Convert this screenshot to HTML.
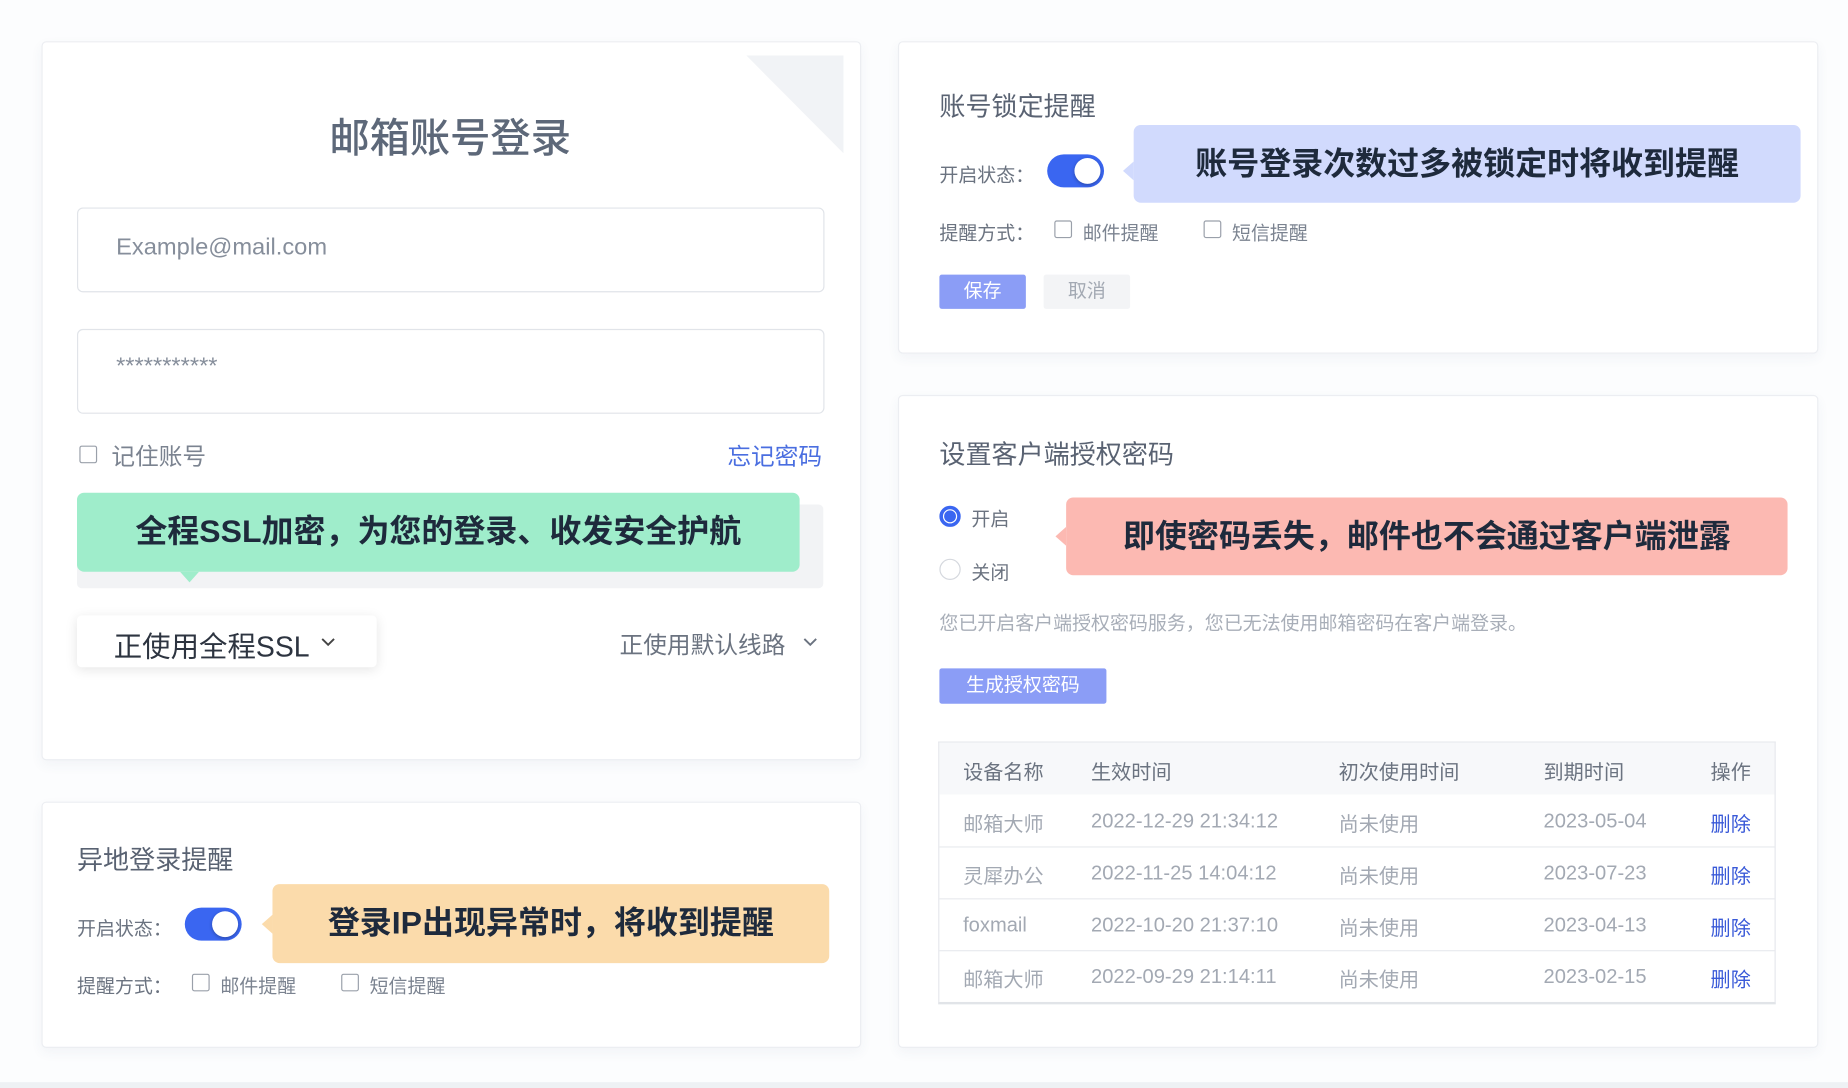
<!DOCTYPE html>
<html><head><meta charset="utf-8">
<style>
html,body{margin:0;padding:0;width:1848px;height:1088px;overflow:hidden;background:#fcfdfe;}
#w{position:absolute;left:0;top:0;width:1560px;height:923px;transform:scale(1.1846,1.1788);transform-origin:0 0;font-family:"Liberation Sans","Noto Sans CJK SC",sans-serif;}
.a{position:absolute;white-space:nowrap;}
.card{position:absolute;background:#fff;border:1px solid #eceef2;border-radius:4px;box-shadow:0 4px 10px rgba(60,80,120,0.05);}
.inp{position:absolute;left:65px;width:629px;height:70px;border:1px solid #e1e4e9;border-radius:5px;background:#fff;}
.cb{position:absolute;width:13px;height:13px;border:1.5px solid #9aa0aa;border-radius:2px;background:#fff;}
.tog{position:absolute;width:48px;height:28px;border-radius:14px;background:#3a66f1;}
.tog::after{content:"";position:absolute;right:3px;top:3px;width:22px;height:22px;border-radius:50%;background:#fff;box-shadow:0 1px 3px rgba(0,0,0,.3);}
.tip{position:absolute;border-radius:6px;color:#1e2a3c;font-size:27px;font-weight:bold;text-align:center;}
.lbl{font-size:16px;color:#6b7380;}
.t{font-size:17px;color:#a3a9b3;}
.del{font-size:17px;color:#3a5ad8;}
.h{font-size:17px;color:#6b7380;}
.row{position:absolute;left:793px;width:705px;height:1px;background:#e8eaee;}
</style></head><body><div id="w">
<div class="a" style="left:0;top:918px;width:1560px;height:5px;background:#eef1f4"></div>

<div class="card" style="left:35px;top:35px;width:690px;height:608px"></div>
<svg class="a" style="left:630px;top:47px" width="83" height="84"><polygon points="0,0 82,0 82,83" fill="#f1f3f6"/></svg>
<div class="a" style="left:0;width:760px;top:90px;text-align:center;font-size:34px;color:#5d6879;font-weight:500">邮箱账号登录</div>
<div class="inp" style="top:176px"></div>
<div class="a" style="left:98px;top:199px;font-size:20px;color:#868e9b">Example@mail.com</div>
<div class="inp" style="top:279px"></div>
<div class="a" style="left:98px;top:300px;font-size:20px;color:#868e9b">***********</div>
<div class="cb" style="left:67px;top:378px"></div>
<div class="a" style="left:94px;top:371px;font-size:20px;color:#7b8390">记住账号</div>
<div class="a" style="left:614px;top:371px;font-size:20px;color:#4a6ee0">忘记密码</div>
<div class="a" style="left:65px;top:428px;width:630px;height:71px;background:#f2f3f5;border-radius:4px"></div>
<div class="tip" style="left:65px;top:418px;width:610px;height:67px;line-height:66px;background:#9fedcb">全程SSL加密，为您的登录、收发安全护航</div>
<div class="a" style="left:152px;top:485px;width:0;height:0;border-left:8px solid transparent;border-right:8px solid transparent;border-top:9px solid #9fedcb"></div>
<div class="a" style="left:65px;top:522px;width:253px;height:44px;background:#fff;border-radius:4px;box-shadow:0 2px 10px rgba(0,0,0,.10)"></div>
<div class="a" style="left:96px;top:529px;font-size:24px;color:#2d3440">正使用全程SSL</div>
<svg class="a" style="left:270px;top:540px" width="14" height="10"><path d="M2 2l5 5 5-5" fill="none" stroke="#444" stroke-width="1.6"/></svg>
<div class="a" style="left:523px;top:531px;font-size:20px;color:#6b7380">正使用默认线路</div>
<svg class="a" style="left:677px;top:540px" width="14" height="10"><path d="M2 2l5 5 5-5" fill="none" stroke="#6b7380" stroke-width="1.6"/></svg>

<div class="card" style="left:35px;top:680px;width:690px;height:207px"></div>
<div class="a" style="left:65px;top:712px;font-size:22px;color:#596272">异地登录提醒</div>
<div class="a lbl" style="left:65px;top:774px">开启状态：</div>
<div class="tog" style="left:156px;top:770px"></div>
<div class="tip" style="left:230px;top:750px;width:470px;height:67px;line-height:67px;background:#fbdbab">登录IP出现异常时，将收到提醒</div>
<div class="a" style="left:221px;top:776px;border-top:8px solid transparent;border-bottom:8px solid transparent;border-right:9px solid #fbdbab"></div>
<div class="a lbl" style="left:65px;top:823px">提醒方式：</div>
<div class="cb" style="left:162px;top:826px"></div>
<div class="a lbl" style="left:186px;top:823px;color:#7b8390">邮件提醒</div>
<div class="cb" style="left:288px;top:826px"></div>
<div class="a lbl" style="left:312px;top:823px;color:#7b8390">短信提醒</div>

<div class="card" style="left:758px;top:35px;width:775px;height:263px"></div>
<div class="a" style="left:793px;top:73px;font-size:22px;color:#596272">账号锁定提醒</div>
<div class="a lbl" style="left:793px;top:135px">开启状态：</div>
<div class="tog" style="left:884px;top:131px"></div>
<div class="tip" style="left:957px;top:106px;width:563px;height:66px;line-height:66px;background:#d1dafd">账号登录次数过多被锁定时将收到提醒</div>
<div class="a" style="left:948px;top:137px;border-top:8px solid transparent;border-bottom:8px solid transparent;border-right:9px solid #d1dafd"></div>
<div class="a lbl" style="left:793px;top:184px">提醒方式：</div>
<div class="cb" style="left:890px;top:187px"></div>
<div class="a lbl" style="left:914px;top:184px;color:#7b8390">邮件提醒</div>
<div class="cb" style="left:1016px;top:187px"></div>
<div class="a lbl" style="left:1040px;top:184px;color:#7b8390">短信提醒</div>
<div class="a" style="left:793px;top:233px;width:73px;height:29px;line-height:29px;text-align:center;background:#8b9df6;color:#fff;font-size:16px;border-radius:2px">保存</div>
<div class="a" style="left:881px;top:233px;width:73px;height:29px;line-height:29px;text-align:center;background:#f3f4f6;color:#a3a9b3;font-size:16px;border-radius:2px">取消</div>

<div class="card" style="left:758px;top:335px;width:775px;height:552px"></div>
<div class="a" style="left:793px;top:368px;font-size:22px;color:#596272">设置客户端授权密码</div>
<div class="a" style="left:793px;top:429px;width:12px;height:12px;border:3px solid #3a66f1;border-radius:50%;background:#fff"></div>
<div class="a" style="left:797px;top:433px;width:10px;height:10px;border-radius:50%;background:#3a66f1"></div>
<div class="a lbl" style="left:820px;top:427px;color:#6b7380">开启</div>
<div class="a" style="left:793px;top:474px;width:16px;height:16px;border:1px solid #d5d8de;border-radius:50%;background:#fff"></div>
<div class="a lbl" style="left:820px;top:472px;color:#6b7380">关闭</div>
<div class="tip" style="left:900px;top:422px;width:609px;height:66px;line-height:66px;background:#fcb9b2">即使密码丢失，邮件也不会通过客户端泄露</div>
<div class="a" style="left:891px;top:447px;border-top:8px solid transparent;border-bottom:8px solid transparent;border-right:9px solid #fcb9b2"></div>
<div class="a" style="left:793px;top:515px;font-size:16px;color:#a8aeb8">您已开启客户端授权密码服务，您已无法使用邮箱密码在客户端登录。</div>
<div class="a" style="left:793px;top:567px;width:141px;height:30px;line-height:30px;text-align:center;background:#8b9df6;color:#fff;font-size:16px;border-radius:2px">生成授权密码</div>
<div class="a" style="left:792px;top:629px;width:705px;height:220px;border:1px solid #e6e8ec;border-bottom:2px solid #e1e4e8"></div>
<div class="a" style="left:793px;top:630px;width:705px;height:44px;background:#f7f8fa"></div>
<div class="a h" style="left:813px;top:641px">设备名称</div>
<div class="a h" style="left:921px;top:641px">生效时间</div>
<div class="a h" style="left:1130px;top:641px">初次使用时间</div>
<div class="a h" style="left:1303px;top:641px">到期时间</div>
<div class="a h" style="left:1444px;top:641px">操作</div>
<div class="row" style="top:718px"></div>
<div class="row" style="top:762px"></div>
<div class="row" style="top:806px"></div>

<div class="a t" style="left:813px;top:685px">邮箱大师</div>
<div class="a t" style="left:921px;top:687px">2022-12-29 21:34:12</div>
<div class="a t" style="left:1130px;top:685px">尚未使用</div>
<div class="a t" style="left:1303px;top:687px">2023-05-04</div>
<div class="a del" style="left:1444px;top:685px">删除</div>

<div class="a t" style="left:813px;top:729px">灵犀办公</div>
<div class="a t" style="left:921px;top:731px">2022-11-25 14:04:12</div>
<div class="a t" style="left:1130px;top:729px">尚未使用</div>
<div class="a t" style="left:1303px;top:731px">2023-07-23</div>
<div class="a del" style="left:1444px;top:729px">删除</div>

<div class="a t" style="left:813px;top:775px">foxmail</div>
<div class="a t" style="left:921px;top:775px">2022-10-20 21:37:10</div>
<div class="a t" style="left:1130px;top:773px">尚未使用</div>
<div class="a t" style="left:1303px;top:775px">2023-04-13</div>
<div class="a del" style="left:1444px;top:773px">删除</div>

<div class="a t" style="left:813px;top:817px">邮箱大师</div>
<div class="a t" style="left:921px;top:819px">2022-09-29 21:14:11</div>
<div class="a t" style="left:1130px;top:817px">尚未使用</div>
<div class="a t" style="left:1303px;top:819px">2023-02-15</div>
<div class="a del" style="left:1444px;top:817px">删除</div>
</div></body></html>
